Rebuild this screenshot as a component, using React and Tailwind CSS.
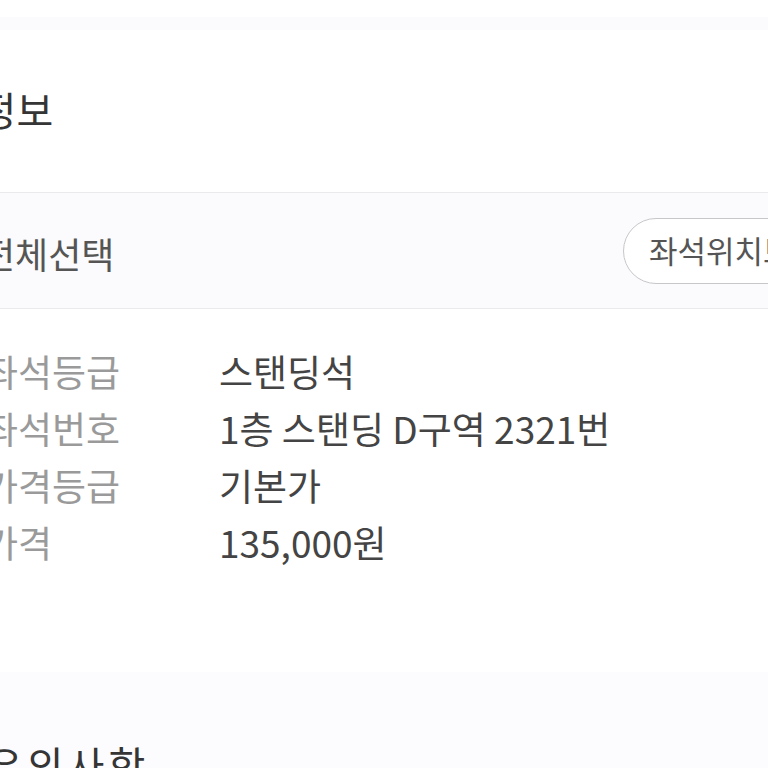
export default function App() {
  const rows = [
    ["좌석등급", "스탠딩석"],
    ["좌석번호", "1층 스탠딩 D구역 2321번"],
    ["가격등급", "기본가"],
    ["가격", "135,000원"],
  ];

  return (
    <div
      className="w-[768px] h-[768px] overflow-hidden bg-white"
      style={{ fontFamily: '"Noto Sans CJK KR", "Noto Sans", sans-serif' }}
    >
      <div className="w-[900px] -ml-[18px]">
        {/* top strip */}
        <div className="h-[17px]" />
        <div className="h-[13px] bg-[#fbfafc]" />

        {/* title */}
        <div className="h-[162px] pt-[55px]">
          <h1 className="-ml-[76px] text-[40px] leading-[48px] font-normal text-[#353535]">좌석정보</h1>
        </div>

        {/* select all bar */}
        <div className="h-[117px] pt-[4px] border-y border-[#ebe9ee] bg-[#fbfafc] flex items-center">
          <span className="w-[641px] shrink-0 text-[36px] text-[#555]">전체선택</span>
          <button className="h-[66px] -mt-[4px] px-[25px] rounded-full border-[1.5px] border-[#c8c6ca] bg-white text-[31px] text-[#555] whitespace-nowrap">
            좌석위치보기
          </button>
        </div>

        {/* seat info rows */}
        <div className="pt-[34px] h-[363px] pl-[2px]">
          {rows.map(([label, value]) => (
            <div key={label} className="h-[57px] flex items-center text-[37px]">
              <span className="w-[235px] shrink-0 text-[#9a9a9a]">{label}</span>
              <span className="text-[#444]">{value}</span>
            </div>
          ))}
        </div>

        {/* notice */}
        <div className="bg-[#fcfbfd] pt-[68px] h-[200px]">
          <h2 className="ml-[4px] tracking-[4px] text-[40px] leading-[48px] font-normal text-[#353535]">유의사항</h2>
        </div>
      </div>
    </div>
  );
}
